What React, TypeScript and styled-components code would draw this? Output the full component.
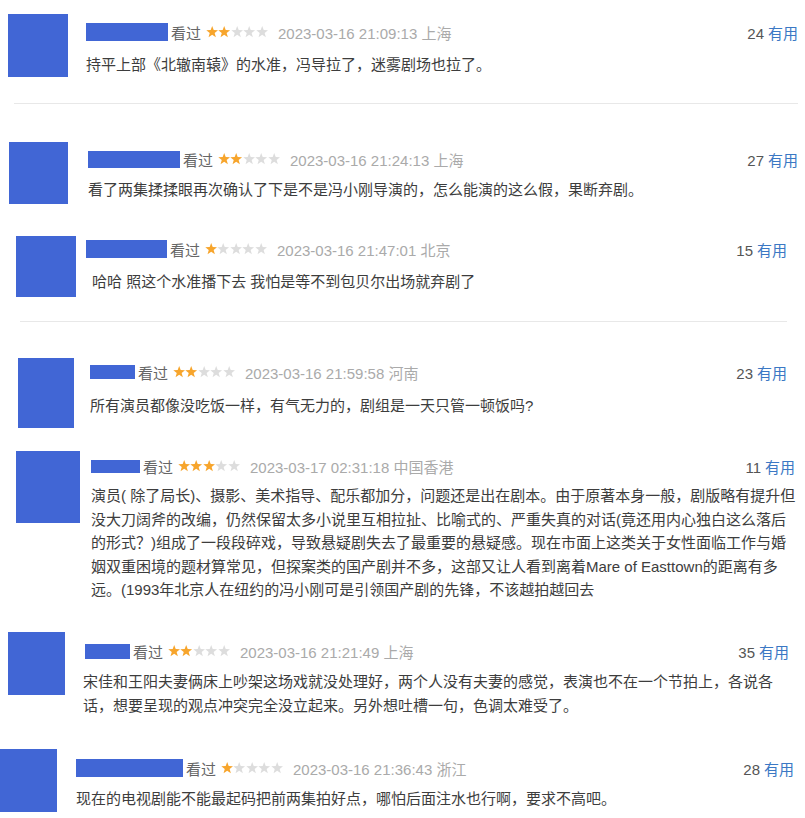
import { createGlobalStyle, styled } from "styled-components";

interface IComment {
    nameW: number;
    nameH: number;
    stars: number;
    time: string;
    votes: number;
    lines: string[];
    // collage offsets, each comment was clipped from a different screenshot
    height: number;
    padTop: number;
    left: number;
    right: number;
    avatarW: number;
    avatarH: number;
    gap: number;
    headTop: number;
    textTop: number;
    textIndent?: number;
    divider?: { top: number; left: number; right: number };
}

const comments: IComment[] = [
    {
        nameW: 82, nameH: 18, stars: 2, time: "2023-03-16 21:09:13 上海", votes: 24,
        lines: ["持平上部《北辙南辕》的水准，冯导拉了，迷雾剧场也拉了。"],
        height: 120, padTop: 14, left: 8, right: 7, avatarW: 60, avatarH: 63, gap: 18, headTop: 9, textTop: 12,
        divider: { top: 26, left: 14, right: 7 },
    },
    {
        nameW: 92, nameH: 17, stars: 2, time: "2023-03-16 21:24:13 上海", votes: 27,
        lines: ["看了两集揉揉眼再次确认了下是不是冯小刚导演的，怎么能演的这么假，果断弃剧。"],
        height: 105, padTop: 22, left: 9, right: 7, avatarW: 59, avatarH: 62, gap: 20, headTop: 8, textTop: 10,
    },
    {
        nameW: 81, nameH: 18, stars: 1, time: "2023-03-16 21:47:01 北京", votes: 15,
        lines: ["哈哈 照这个水准播下去 我怕是等不到包贝尔出场就弃剧了"],
        height: 115, padTop: 11, left: 16, right: 18, avatarW: 60, avatarH: 61, gap: 10, headTop: 4, textTop: 12, textIndent: 6,
        divider: { top: 24, left: 20, right: 18 },
    },
    {
        nameW: 45, nameH: 14, stars: 2, time: "2023-03-16 21:59:58 河南", votes: 23,
        lines: ["所有演员都像没吃饭一样，有气无力的，剧组是一天只管一顿饭吗?"],
        height: 100, padTop: 18, left: 18, right: 18, avatarW: 56, avatarH: 70, gap: 16, headTop: 5, textTop: 13,
    },
    {
        nameW: 49, nameH: 13, stars: 3, time: "2023-03-17 02:31:18 中国香港", votes: 11,
        lines: [
            "演员( 除了局长)、摄影、美术指导、配乐都加分，问题还是出在剧本。由于原著本身一般，剧版略有提升但",
            "没大刀阔斧的改编，仍然保留太多小说里互相拉扯、比喻式的、严重失真的对话(竟还用内心独白这么落后",
            "的形式？)组成了一段段碎戏，导致悬疑剧失去了最重要的悬疑感。现在市面上这类关于女性面临工作与婚",
            "姻双重困境的题材算常见，但探案类的国产剧并不多，这部又让人看到离着Mare of Easttown的距离有多",
            "远。(1993年北京人在纽约的冯小刚可是引领国产剧的先锋，不该越拍越回去",
        ],
        height: 175, padTop: 11, left: 16, right: 10, avatarW: 64, avatarH: 72, gap: 11, headTop: 6, textTop: 9,
    },
    {
        nameW: 45, nameH: 15, stars: 2, time: "2023-03-16 21:21:49 上海", votes: 35,
        lines: [
            "宋佳和王阳夫妻俩床上吵架这场戏就没处理好，两个人没有夫妻的感觉，表演也不在一个节拍上，各说各",
            "话，想要呈现的观点冲突完全没立起来。另外想吐槽一句，色调太难受了。",
        ],
        height: 120, padTop: 17, left: 8, right: 16, avatarW: 57, avatarH: 63, gap: 20, headTop: 10, textTop: 10, textIndent: -2,
    },
    {
        nameW: 107, nameH: 18, stars: 1, time: "2023-03-16 21:36:43 浙江", votes: 28,
        lines: ["现在的电视剧能不能最起码把前两集拍好点，哪怕后面注水也行啊，要求不高吧。"],
        height: 83, padTop: 14, left: 0, right: 11, avatarW: 57, avatarH: 63, gap: 19, headTop: 10, textTop: 10,
    },
];

const GlobalStyle = createGlobalStyle`
    html, body {
        margin: 0;
        padding: 0;
        background: #ffffff;
        overflow: hidden;
    }
    body {
        font-family: "Liberation Sans", "Noto Sans CJK SC", sans-serif;
    }
`;

const Page = styled.div`
    width: 805px;
    height: 818px;
    display: flex;
    flex-direction: column;
`;

const Card = styled.div<{ $height: number; $padTop: number }>`
    height: ${({ $height }) => $height}px;
    padding-top: ${({ $padTop }) => $padTop}px;
    box-sizing: border-box;
    display: flex;
    flex-direction: column;
    flex-shrink: 0;
`;

const Row = styled.div<{ $left: number; $right: number; $gap: number }>`
    display: flex;
    align-items: flex-start;
    gap: ${({ $gap }) => $gap}px;
    padding-left: ${({ $left }) => $left}px;
    padding-right: ${({ $right }) => $right}px;
`;

const Avatar = styled.div<{ $w: number; $h: number }>`
    width: ${({ $w }) => $w}px;
    height: ${({ $h }) => $h}px;
    background: #4166d5;
    flex-shrink: 0;
`;

const Body = styled.div<{ $top: number }>`
    flex: 1;
    display: flex;
    flex-direction: column;
    margin-top: ${({ $top }) => $top}px;
    min-width: 0;
`;

const Header = styled.div`
    height: 18px;
    display: flex;
    align-items: center;
    font-size: 15px;
    white-space: nowrap;
`;

const NameBar = styled.span<{ $w: number; $h: number }>`
    width: ${({ $w }) => $w}px;
    height: ${({ $h }) => $h}px;
    background: #4166d5;
    margin-right: 3px;
`;

const Status = styled.span`
    color: #666666;
    margin-right: 5px;
`;

const Stars = styled.span`
    display: flex;
    margin-right: 10px;

    svg {
        width: 12.4px;
        height: 12.4px;
        display: block;
    }
`;

const Time = styled.span`
    color: #aaaaaa;
    font-size: 15px;
`;

const Votes = styled.span`
    margin-left: auto;
    color: #555555;

    span {
        color: #3b78c4;
        margin-left: 4px;
    }
`;

const Text = styled.div<{ $top: number; $indent: number }>`
    margin-top: ${({ $top }) => $top}px;
    margin-left: ${({ $indent }) => $indent}px;
    font-size: 15px;
    line-height: 23.5px;
    color: #3d3d3d;
    white-space: nowrap;

    p {
        margin: 0;
    }
`;

const Divider = styled.div<{ $top: number; $left: number; $right: number }>`
    height: 1px;
    background: #e8e8e8;
    margin: ${({ $top, $right, $left }) => `${$top}px ${$right}px 0 ${$left}px`};
`;

function Star({ on }: { on: boolean }) {
    return (
        <svg viewBox="0 0 12 12">
            <polygon
                points="6,0 7.47,3.98 11.71,4.15 8.38,6.77 9.53,10.85 6,8.5 2.47,10.85 3.62,6.77 0.29,4.15 4.53,3.98"
                fill={on ? "#f7a52c" : "#dddddd"}
            />
        </svg>
    );
}

function App() {
    return (
        <Page>
            <GlobalStyle />
            {comments.map((c, index) => (
                <Card key={index} $height={c.height} $padTop={c.padTop}>
                    <Row $left={c.left} $right={c.right} $gap={c.gap}>
                        <Avatar $w={c.avatarW} $h={c.avatarH} />
                        <Body $top={c.headTop}>
                            <Header>
                                <NameBar $w={c.nameW} $h={c.nameH} />
                                <Status>看过</Status>
                                <Stars>
                                    {[0, 1, 2, 3, 4].map((i) => (
                                        <Star key={i} on={i < c.stars} />
                                    ))}
                                </Stars>
                                <Time>{c.time}</Time>
                                <Votes>
                                    {c.votes}
                                    <span>有用</span>
                                </Votes>
                            </Header>
                            <Text $top={c.textTop} $indent={c.textIndent ?? 0}>
                                {c.lines.map((line, i) => (
                                    <p key={i}>{line}</p>
                                ))}
                            </Text>
                        </Body>
                    </Row>
                    {c.divider && (
                        <Divider $top={c.divider.top} $left={c.divider.left} $right={c.divider.right} />
                    )}
                </Card>
            ))}
        </Page>
    );
}

export default App;
